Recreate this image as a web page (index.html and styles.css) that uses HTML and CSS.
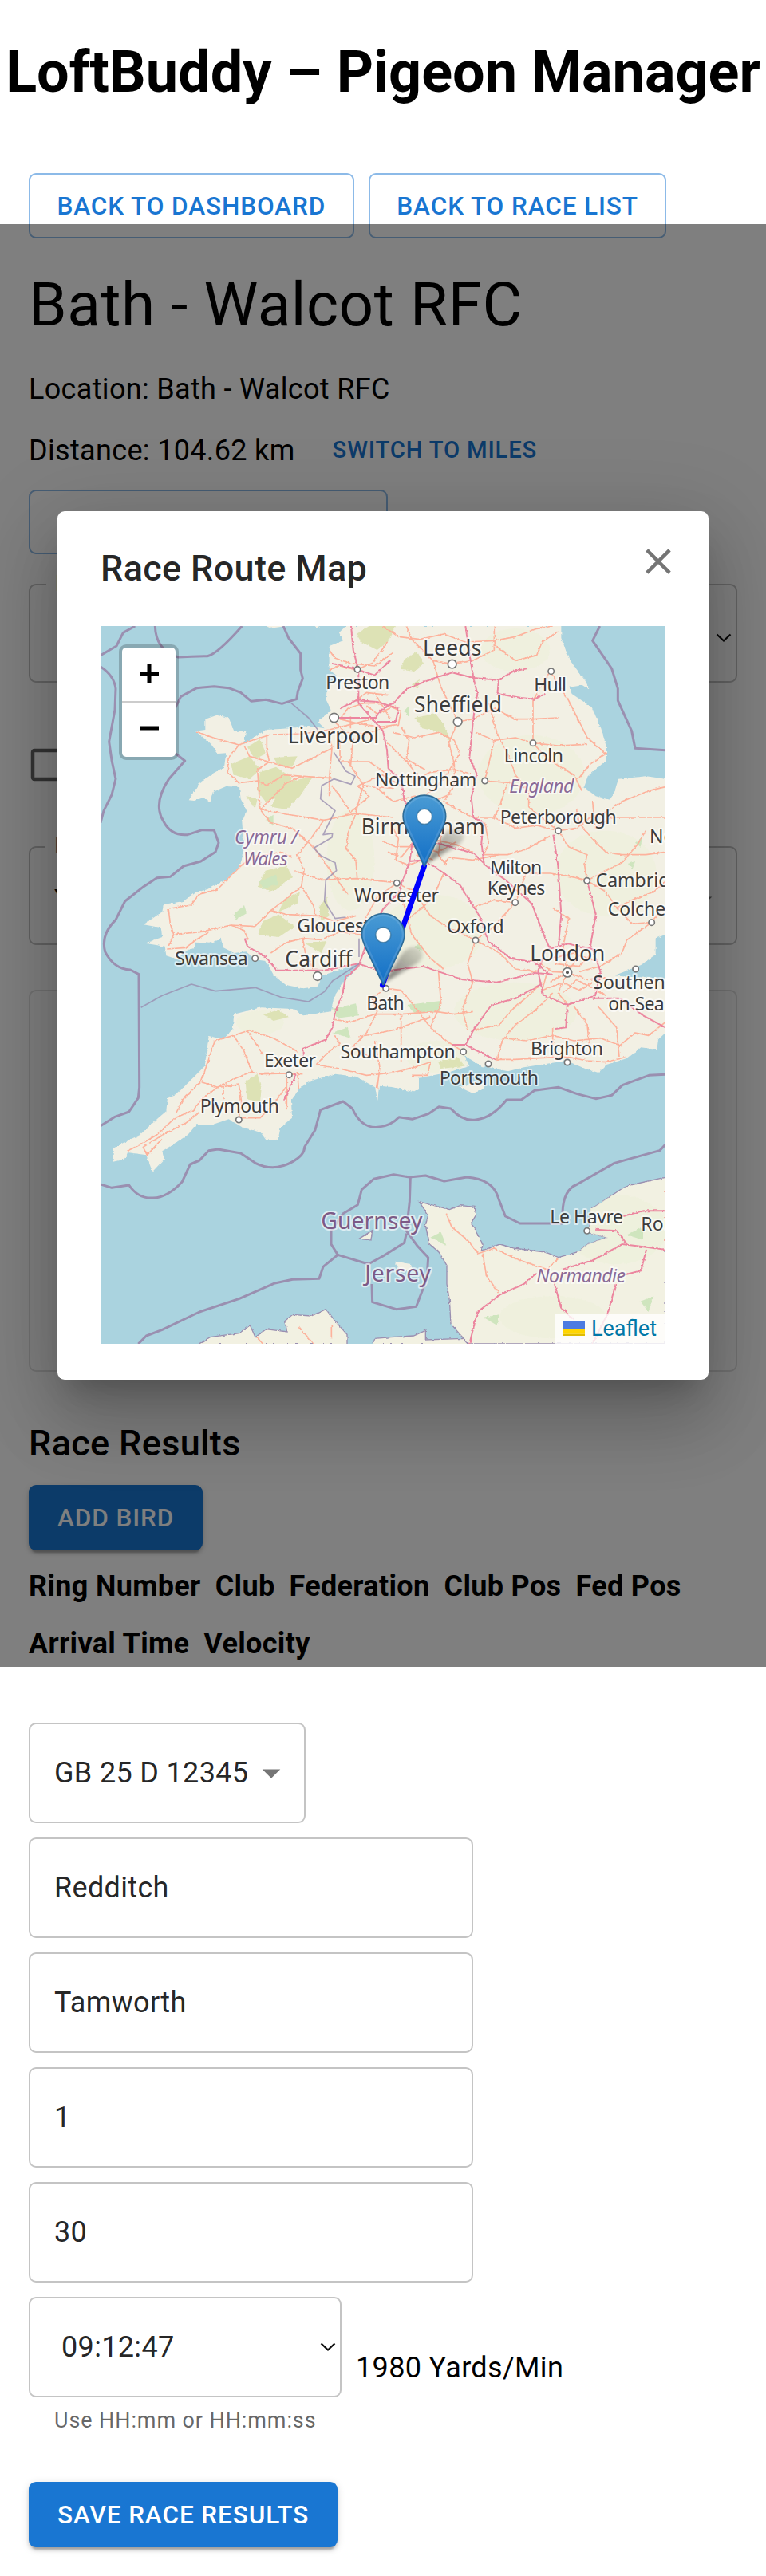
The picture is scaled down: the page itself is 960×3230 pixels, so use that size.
FILE: index.html
```html
<!DOCTYPE html>
<html lang="en">
<head>
  <meta charset="UTF-8">
  <title>LoftBuddy – Pigeon Manager</title>
  <link rel="stylesheet" href="styles.css">
</head>
<body>
  <h1 class="app-title">LoftBuddy – Pigeon Manager</h1>

  <main class="page">
    <div class="nav-buttons">
      <button class="btn btn-outlined">Back to Dashboard</button>
      <button class="btn btn-outlined">Back to Race List</button>
    </div>

    <h2 class="race-name">Bath - Walcot RFC</h2>
    <p class="info">Location: Bath - Walcot RFC</p>
    <div class="distance">
      <p class="info">Distance: 104.62 km</p>
      <button class="btn btn-text">Switch to Miles</button>
    </div>

    <div class="btn btn-outlined map-button"></div>

    <fieldset class="field field-time">
      <legend>L</legend>
      <svg class="chevron" viewBox="0 0 20 12"><path d="M1.5 1.5L10 9.5l8.5-8"/></svg>
    </fieldset>
    <svg class="checkbox" viewBox="0 0 24 24"><path d="M19 5v14H5V5h14m0-2H5c-1.1 0-2 .9-2 2v14c0 1.1.9 2 2 2h14c1.1 0 2-.9 2-2V5c0-1.1-.9-2-2-2z"/></svg>
    <fieldset class="field field-select">
      <legend>L</legend>
      <span>Y</span>
      <svg class="arrow" viewBox="0 0 24 24"><path d="M7 10l5 5 5-5z"/></svg>
    </fieldset>
    <div class="card"></div>

    <h3 class="section-title">Race Results</h3>
    <button class="btn btn-contained">Add Bird</button>

    <div class="results-head">
      <b>Ring Number</b>
      <b>Club</b>
      <b>Federation</b>
      <b>Club Pos</b>
      <b>Fed Pos</b>
      <b>Arrival Time</b>
      <b>Velocity</b>
    </div>

    <div class="results-row">
      <div class="input input-ring">
        <span>GB 25 D 12345</span>
        <svg class="arrow" viewBox="0 0 24 24"><path d="M7 10l5 5 5-5z"/></svg>
      </div>
      <div class="input">Redditch</div>
      <div class="input">Tamworth</div>
      <div class="input">1</div>
      <div class="input">30</div>
      <div class="arrival">
        <div>
          <div class="input input-time">
            <span>09:12:47</span>
            <svg class="chevron" viewBox="0 0 20 12"><path d="M1.5 1.5L10 9.5l8.5-8"/></svg>
          </div>
          <p class="helper">Use HH:mm or HH:mm:ss</p>
        </div>
        <p class="velocity">1980 Yards/Min</p>
      </div>
    </div>

    <button class="btn btn-contained save">Save Race Results</button>
  </main>

  <div class="backdrop">
    <div class="dialog">
      <div class="dialog-head">
        <h2>Race Route Map</h2>
        <svg class="close" viewBox="0 0 24 24"><path d="M19 6.41L17.59 5 12 10.59 6.41 5 5 6.41 10.59 12 5 17.59 6.41 19 12 13.41 17.59 19 19 17.59 13.41 12z"/></svg>
      </div>

      <div class="map">
        <svg class="map-tiles" viewBox="0 0 2124 2700">
          <defs>
            <linearGradient id="pin" x1="0" y1="0" x2="0" y2="1">
              <stop offset="0" stop-color="#4a9bd4"/>
              <stop offset="1" stop-color="#126fc6"/>
            </linearGradient>
            <linearGradient id="shade" x1="0" y1="1" x2="1" y2="0">
              <stop offset="0" stop-color="#000" stop-opacity=".7"/>
              <stop offset="1" stop-color="#000" stop-opacity=".12"/>
            </linearGradient>
            <filter id="rough" x="0" y="0" width="1" height="1">
              <feTurbulence type="fractalNoise" baseFrequency=".07" numOctaves="3" seed="4"/>
              <feDisplacementMap in="SourceGraphic" scale="9" xChannelSelector="R" yChannelSelector="G"/>
            </filter>
            <filter id="soft" x="-.5" y="-.5" width="2" height="2"><feGaussianBlur stdDeviation="7"/></filter>
            <clipPath id="coast">
              <path id="gb" d="M922 0L897 25 912 55 860 75V165L887 185 852 235 847 275 867 315 817 360 842 385 782 375 712 385 622 390 582 415 537 445 547 395 502 395 482 345 437 335 394 350V390L357 395 412 440 442 480 472 478 465 530 422 555 372 590 332 655 352 657 387 645 412 665 422 625 472 603 522 605 527 650 550 695 532 735 537 805 532 875 522 905 472 955 402 990 352 1005 312 1035 237 1047 232 1075 162 1123 227 1135 232 1170 167 1193 242 1205 247 1240 292 1255 312 1225 357 1210V1190L412 1193 452 1175 462 1210 502 1230 547 1225 582 1255 622 1260 652 1315 697 1350 762 1363 817 1355 832 1315 892 1295 972 1270 967 1285 917 1335 877 1395 867 1450 762 1465 722 1440 602 1435 502 1460 497 1515 462 1555 407 1542 392 1655 332 1715 282 1765 252 1775 247 1825 217 1850 147 1915 102 1935 47 1965V2015L92 2005 102 1980 172 1990 195 2053 240 2005 232 1975 257 1960 327 1915 362 1875 422 1875 482 1855 532 1885 602 1905 622 1933 667 1935 677 1885 720 1850 717 1785 747 1740 792 1710 882 1685 962 1695 1032 1735 1042 1785 1047 1730 1102 1735 1177 1753 1197 1740V1700L1302 1680 1387 1655 1367 1615 1432 1655 1532 1675 1592 1660 1752 1635 1822 1665 1872 1680 1902 1650 1982 1625 2032 1585 2092 1593 2097 1555 2124 1530V1325L1992 1320 1932 1315 2032 1275 2087 1235V1175L2124 1160V575L2052 565 1947 575 1932 625 1912 653 1862 640 1817 605 1832 565 1902 505V455L1882 385 1847 305 1772 255 1762 230 1812 223 1840 240 1822 205 1762 125 1732 45V0z"/>
              <path id="fr" d="M1197 2165L1312 2195 1352 2180 1407 2185 1412 2215 1394 2245 1437 2325 1432 2350 1502 2325 1552 2340 1672 2355 1722 2375 1792 2355 1832 2325 1902 2300 1832 2280 1842 2195 1962 2115 1992 2103 2124 2073V2700H1382L1352 2665 1317 2625 1312 2535 1302 2475V2405L1272 2355 1237 2325 1222 2255 1232 2215z"/>
            </clipPath>
          </defs>

          <rect width="2124" height="2700" fill="#aad3df"/>

          <g filter="url(#rough)">
            <!-- land -->
            <g fill="#f2f0e4">
              <use href="#gb"/>
              <path d="M1350 1735L1400 1758 1432 1745 1452 1722 1400 1718z"/>
              <path d="M610 -5L640 8 700 0zM802 0L812 8 822 0z"/>
            </g>
            <g fill="#f2f1e2" stroke="#9a8fb0" stroke-width="4">
              <use href="#fr"/>
              <path d="M367 2702L412 2675 522 2660 562 2630 582 2675 622 2645 702 2655 692 2615 722 2590 792 2595 847 2570 887 2620 927 2665V2702zM1022 2702L1032 2680 1092 2675 1177 2670 1222 2650V2685L1362 2680 1382 2702z"/>
              <path d="M972 2305L1022 2273 1017 2310z"/>
            </g>
            <path d="M1107 2390L1167 2400 1172 2425 1122 2430z" fill="#f2f0e4"/>

            <!-- farmland and hills -->
            <g clip-path="url(#coast)">
              <g fill="#eef1dc" opacity=".8">
                <ellipse cx="1620" cy="560" rx="200" ry="150"/>
                <ellipse cx="1900" cy="930" rx="190" ry="160"/>
                <ellipse cx="1250" cy="1150" rx="190" ry="140"/>
                <ellipse cx="1560" cy="1450" rx="230" ry="110"/>
                <ellipse cx="940" cy="880" rx="90" ry="190"/>
                <ellipse cx="1560" cy="90" rx="130" ry="80"/>
                <ellipse cx="1940" cy="2270" rx="190" ry="130"/>
                <ellipse cx="1700" cy="2600" rx="200" ry="80"/>
                <ellipse cx="1270" cy="1620" rx="120" ry="60"/>
                <ellipse cx="600" cy="1490" rx="90" ry="45"/>
              </g>
              <g fill="#dde2b5">
                <path d="M962 30L1010 0H1110L1080 60 1040 90 980 60z"/>
                <path d="M1140 130L1190 95 1215 140 1180 170 1130 165zM1180 345L1260 330 1290 370 1320 440 1280 400 1210 385zM1170 220L1200 200 1190 235z"/>
                <path d="M552 455L600 425 622 480 580 500zM490 520L560 490 600 540 560 575 500 560z"/>
                <path d="M600 550L660 530 720 570 690 640 620 660 590 620zM650 495L740 490 720 530 670 525zM690 590L800 565 750 640 700 690 640 680zM550 640L590 650 580 690z"/>
                <path d="M620 920L700 900 720 945 650 1000 590 980zM690 1030L750 1000 740 1045 670 1075zM610 1110L670 1085 730 1130 670 1170 590 1160z"/>
                <path d="M820 1060L850 1020 860 1090 830 1110zM770 1195L850 1185 830 1230z"/>
                <path d="M545 1710L590 1685 605 1740 600 1790 550 1780zM610 1460L670 1445 710 1470 650 1485z"/>
                <path d="M1270 1640L1340 1620 1370 1655 1280 1665z"/>
              </g>
              <g fill="#cfe5be">
                <path d="M500 1085L540 1050 550 1080 510 1105zM600 960L660 935 670 970 610 990zM620 730L650 710 650 750z"/>
                <path d="M870 1440L960 1420 970 1465 890 1475zM1150 1425L1280 1410 1280 1450 1180 1455zM870 1530L930 1510 940 1550z"/>
                <path d="M1980 2290L2040 2260 2040 2310zM1440 2600L1500 2590 1490 2630zM2030 2540L2080 2520 2060 2580zM1980 895L2010 885 2000 915z"/>
                <path d="M1140 320L1160 300 1160 340zM2010 815L2040 790 2030 830zM1180 1210L1200 1190 1210 1220zM1240 2300L1280 2280 1300 2330z"/>
              </g>
            </g>

            <!-- trunk roads -->
            <g class="road trunk">
              <path d="M360 397L430 422 520 447 570 430 640 408 760 405 860 390 940 370 1040 345"/>
              <path d="M520 447L480 500 478 550 520 590 590 582 625 600 690 560 760 565 870 572"/>
              <path d="M625 410V470L635 510 590 540 600 690 640 740 720 760 800 830 930 1010"/>
              <path d="M540 450L560 490 635 512 720 535 780 505 870 460"/>
              <path d="M600 690L650 640 700 590 760 565M605 690L700 708 840 730 960 705 1100 720M840 730L790 800 740 860 765 920 755 980 680 1040 640 1070 580 1130"/>
              <path d="M255 1060L262 1120 275 1160 380 1150 490 1125 540 1145 555 1180M262 1062L340 1050 370 1010 440 990 480 950 530 900 570 870 680 850 720 870"/>
              <path d="M275 1160L255 1205M250 1215L320 1210 360 1180 410 1150M580 1130L490 1125M640 1070L700 1085 820 1090 880 1110 960 1090"/>
              <path d="M640 1230L700 1190 760 1175 830 1180 900 1150 980 1160M760 1175L770 1230 800 1290M755 980L800 1050 810 1090M730 920L830 955 960 950 1110 965"/>
              <path d="M870 600L900 640 940 700 1010 640 970 600 1060 560 1130 600M960 705L930 780 925 840 960 880 965 950M990 590L960 700"/>
              <path d="M860 90L880 120 940 140 1030 150 1100 100M860 165L900 150 960 165 1020 140 1080 60"/>
              <path d="M860 400L870 460 860 570 860 640M900 430V510L1010 510 1080 560M950 420L940 530M930 510L990 600 1100 610"/>
              <path d="M900 350L930 310 990 290 1060 290 1130 320 1120 370 1050 380 960 365 900 350M880 360L920 400 1000 405 1080 380M940 340V385M1000 300L1040 330 1110 300M1030 250L1060 300 1090 350M960 280L1000 250 1080 260"/>
              <path d="M1062 0L1120 40 1200 50 1290 30 1372 60 1480 55 1560 40 1640 10 1700 0"/>
              <path d="M1150 0L1170 50 1250 130 1322 143 1400 130 1480 90 1480 0M1480 70L1560 130 1640 110 1660 60 1720 20"/>
              <path d="M1250 130L1280 230 1310 290 1343 360 1400 350 1480 310 1560 350 1626 350 1720 345M1626 440V280L1690 170M1626 440L1560 420 1480 430 1410 400"/>
              <path d="M1690 170L1760 280 1800 360 1830 420 1900 480 1840 520 1800 570M1626 440L1720 450 1830 445M1626 440L1680 500 1780 560 1810 620"/>
              <path d="M1460 290L1490 400 1530 480 1560 560 1610 620 1610 680 1680 740 1721 770M1445 582L1540 590 1600 610M1480 430L1445 582"/>
              <path d="M1100 400L1180 420 1270 400 1330 430 1350 480 1300 560 1260 610 1200 650M1080 440L1150 510 1200 570 1240 550 1330 540 1390 555M1130 380L1160 430 1150 500 1220 540"/>
              <path d="M1343 360L1310 440 1330 520 1330 600 1290 660 1340 690 1400 720M1040 610L1100 660 1180 640 1250 660 1320 630"/>
              <path d="M1400 720L1480 720 1500 680 1530 590M1445 740L1460 820 1440 860 1530 860 1600 840 1690 790M1480 720L1560 760 1640 750 1721 770"/>
              <path d="M1721 770L1790 760 1840 720 1900 700 1960 660 2060 620 2124 605M1790 690L1800 740 1840 790 1900 850 1960 860 2050 860 2124 850M1850 660L1860 760 1920 720 2124 720"/>
              <path d="M1721 770L1760 830 1830 860 1820 900 1829 958 1900 920 1960 890 2020 820 2050 770M1829 958L1760 940 1690 930 1600 930 1560 1040 1480 1030 1400 1060"/>
              <path d="M1829 958L1900 1000 1940 1060 2000 1030 2080 1000 2124 960M1940 1060L2000 1120 2072 1115 2110 1060M2072 1115L1980 1180 1960 1230 1880 1280 1800 1300"/>
              <path d="M1114 967L1180 1000 1240 1090 1300 1130 1410 1182 1480 1130 1559 1040M1114 967L1040 1020 980 1130 950 1160M1130 1010L1170 1160 1240 1250 1290 1290"/>
              <path d="M1410 1182L1380 1270 1400 1340 1360 1440 1380 1520M1410 1182L1500 1230 1560 1290 1640 1300M1290 900L1310 870 1400 880 1500 860M1290 930L1260 1000 1220 1050 1160 1100"/>
              <path d="M1080 850L1130 870 1170 820 1240 800 1330 820 1400 850M1150 740L1200 780 1190 860 1250 880M1060 810L1110 830 1190 830 1270 850 1340 810M1230 740L1280 790 1270 860 1300 900M1090 740L1120 800 1110 880 1160 900 1230 870"/>
              <path d="M1073 1363L1130 1370 1180 1430 1240 1510 1300 1560 1364 1601M1073 1363L1020 1400 1040 1450 1000 1530 950 1580 1010 1620"/>
              <path d="M880 1480L940 1490 1030 1460 1130 1460 1260 1450 1330 1460 1400 1450M970 1545L1100 1520 1240 1470M1240 1510L1280 1420 1270 1290M1130 1460V1640M1030 1560L1050 1660 1040 1740"/>
              <path d="M810 1650L860 1600 900 1570 880 1540M810 1650L900 1665 1000 1690 1100 1680 1180 1660 1240 1640 1230 1690 1170 1690"/>
              <path d="M760 1685L700 1683 600 1685 570 1675 500 1705 440 1735 380 1780 350 1820 280 1850 210 1915 150 1950 100 1975M570 1680L540 1600 500 1540 430 1560 400 1650 380 1710 310 1780 285 1830"/>
              <path d="M500 1540L560 1520 650 1550 740 1600M550 1520L610 1610M380 1715L440 1735 520 1725 530 1790 520 1850 600 1850 650 1800 700 1730M370 1830L320 1870 240 1910 160 1960 175 1990 230 1930M462 1735V1780M700 1700V1820M740 1680L745 1740"/>
              <path d="M1402 1520L1500 1500 1540 1450 1620 1380 1660 1340M1490 1635L1510 1560 1560 1500 1640 1440 1700 1380M1480 1630H1560L1650 1625 1752 1620 1830 1635 1900 1640 1980 1620"/>
              <path d="M1520 1550L1600 1560 1700 1540 1780 1560 1880 1550 1960 1580M1700 1510V1620M1780 1430L1830 1500 1840 1600M1870 1430L1940 1510 1950 1620M1950 1580L2010 1530 2060 1540 2124 1490"/>
              <path d="M1640 1260L1700 1300 1755 1303 1830 1330 1900 1320M1755 1303L1740 1200 1760 1100 1700 1060M1755 1303L1720 1380 1760 1430M1680 1300L1660 1370 1740 1340 1800 1370 1850 1340M1700 1250L1780 1230 1860 1260M1710 1270L1800 1280 1840 1240M1690 1340L1755 1303 1800 1240M1740 1380L1790 1330 1900 1390"/>
              <path d="M1300 2210L1320 2260 1380 2310 1420 2360 1480 2340 1560 2380 1680 2420 1707 2475M1437 2360L1450 2440 1500 2515M1680 2420L1720 2380M2124 2110V2345"/>
              <path d="M745 2635L800 2700M587 2675L610 2700M868 2630V2680"/>
            </g>

            <!-- motorways -->
            <g class="road motorway">
              <path d="M942 0L950 90 970 165V290L1062 395 1077 465 1082 535 1132 585 1142 655 1192 745 1262 815 1402 855 1440 890"/>
              <path d="M1372 0L1392 135 1402 195 1417 255 1402 345 1387 495 1414 555 1394 645 1402 720 1440 740 1432 815 1442 895 1522 955 1622 1045 1672 1175 1690 1215"/>
              <path d="M878 345L1032 345 1062 310 1100 290 1152 235 1257 195 1322 175 1402 195 1497 203 1552 170 1602 160M1497 203L1492 255 1582 270 1632 275 1672 255"/>
              <path d="M870 140L966 163 1030 185 1090 130M900 310L960 280 1040 285 1120 310 1110 360 1040 360"/>
              <path d="M1172 815L1162 885 1122 1000 1062 1065 1010 1165 970 1280 922 1320 907 1395 882 1450 872 1510 847 1555 760 1590 762 1620M730 1680V1700L690 1780"/>
              <path d="M1160 885L1217 880 1292 930 1352 975 1427 1095 1457 1185 1542 1250 1632 1265 1690 1310"/>
              <path d="M542 1175L552 1205 622 1245 662 1295H842L970 1270 1060 1300 1092 1295 1212 1280 1362 1330 1492 1340 1632 1305 1700 1310"/>
              <path d="M1660 1345L1560 1400 1470 1425 1402 1520 1372 1575H1322M1372 1575L1440 1610 1490 1635"/>
              <path d="M1645 1300L1672 1220 1755 1195 1850 1215 1880 1300 1860 1390 1755 1425 1665 1390z"/>
              <path d="M1755 1420L1750 1510 1710 1515M1850 1400L1950 1400 2040 1465 2124 1510M1830 960L1862 1085 1842 1205M1702 785L1720 900 1732 1085 1722 1200"/>
              <path d="M1387 2700L1417 2580 1502 2515 1592 2475 1637 2435M1737 2420L1852 2385 1962 2325 2124 2345M1707 2475L1732 2565 1780 2610M1937 2475L1907 2585 1850 2700M1972 2440L2032 2425 2052 2345M1962 2220L2042 2200H2124M1862 2270L1940 2275 1980 2325"/>
            </g>
          </g>

          <!-- borders -->
          <g class="border">
            <path d="M0 110L60 75 85 25 130 0M0 153Q50 185 57 235L54 315 32 435 42 505 57 575 42 635 12 695 0 740"/>
            <path d="M205 0Q207 90 292 117L342 115 402 113Q440 105 532 0"/>
            <path d="M687 0L707 45 752 103V165L760 197 742 245 737 275 682 292 622 277 567 283 527 250 482 233 427 227 362 233 302 265 277 315 270 470 317 507 257 575Q195 670 237 735 265 790 327 785L382 767 427 768 444 815 432 850 377 885 312 903 262 943 212 947 162 980 92 1035 57 1105Q0 1160 17 1225 50 1290 112 1293L144 1310 146 1735 142 1775 107 1827 52 1847 0 1880"/>
            <path d="M0 2100L42 2113 107 2103Q142 2155 197 2151 252 2150 307 2090L337 2025 372 2010 407 1973 442 1968 527 1983 582 2020Q652 2055 722 2015 767 1990 767 1960L807 1895 827 1820 912 1788 947 1815Q980 1890 1042 1885 1092 1880 1122 1847L1172 1855 1232 1835 1272 1808 1317 1815Q1362 1865 1412 1857 1472 1850 1527 1782L1582 1782 1632 1747 1722 1735 1792 1760 1862 1778 1922 1765 1962 1727 2062 1690 2124 1687"/>
            <path d="M142 2700L172 2670 232 2647 372 2580 522 2530 652 2473 722 2458 822 2455 837 2410 892 2365 867 2325V2275L912 2210 967 2177 982 2120 1027 2080 1102 2063 1162 2073 1222 2067 1292 2088 1377 2073Q1475 2080 1495 2150L1522 2220 1577 2247H1737"/>
            <path d="M1737 2205Q1740 2120 1792 2100L1932 2020 2102 1973 2124 1950"/>
            <path d="M1165 2073L1162 2165 1150 2275 1190 2330 1232 2375 1227 2455 1187 2560 1112 2570 1022 2543 1020 2475M892 2365L1007 2400 1062 2370 1142 2320 1150 2285"/>
            <path d="M1877 0L1850 55 1922 160 1945 235V280L1997 395 2010 460 2124 467"/>
            <path class="thin" d="M717 290L782 345 817 390M152 1435L232 1390 342 1347 432 1373 582 1360 682 1397 782 1413 842 1375 872 1335 972 1270"/>
            <path class="thin" d="M877 475L922 545 957 565 942 595 877 575 832 600 827 650 882 695 867 725 837 785 872 780 870 795 802 835 830 865 882 890 887 920 847 955 842 1035 882 1100 922 1095M972 1175V1245"/>
          </g>

          <g class="town">
            <circle cx="1322" cy="143" r="16"/><circle cx="1343" cy="360" r="16"/>
            <circle cx="878" cy="345" r="17"/><circle cx="816" cy="1317" r="16"/>
            <circle cx="966" cy="163" r="11"/><circle cx="1626" cy="440" r="11"/>
            <circle cx="1694" cy="170" r="11"/><circle cx="1445" cy="582" r="11"/>
            <circle cx="1721" cy="770" r="11"/><circle cx="1114" cy="967" r="11"/>
            <circle cx="1559" cy="1040" r="11"/><circle cx="1829" cy="958" r="11"/>
            <circle cx="2072" cy="1115" r="11"/><circle cx="1410" cy="1182" r="11"/>
            <circle cx="2012" cy="1290" r="11"/><circle cx="581" cy="1250" r="11"/>
            <circle cx="1073" cy="1363" r="11"/><circle cx="709" cy="1688" r="11"/>
            <circle cx="520" cy="1857" r="11"/><circle cx="1364" cy="1601" r="11"/>
            <circle cx="1458" cy="1647" r="11"/><circle cx="1755" cy="1641" r="11"/>
            <circle cx="1829" cy="2275" r="11"/><circle cx="1755" cy="1303" r="17"/>
            <circle class="capital" cx="1755" cy="1303" r="6"/>
          </g>

          <g class="label">
            <text x="847" y="237" textLength="240">Preston</text>
            <text x="1630" y="247" textLength="122">Hull</text>
            <text x="1517" y="513" textLength="223">Lincoln</text>
            <text x="1032" y="603" textLength="382">Nottingham</text>
            <text x="1502" y="745" textLength="438">Peterborough</text>
            <text x="2064" y="815">Norwich</text>
            <text x="1464" y="932" textLength="196">Milton</text>
            <text x="1454" y="1012" textLength="218">Keynes</text>
            <text x="1862" y="982">Cambridge</text>
            <text x="1907" y="1088">Colchester</text>
            <text x="954" y="1037" textLength="318">Worcester</text>
            <text x="739" y="1152" textLength="340">Gloucester</text>
            <text x="1302" y="1155" textLength="215">Oxford</text>
            <text x="280" y="1275" textLength="274">Swansea</text>
            <text x="1852" y="1365">Southend-</text>
            <text x="1909" y="1447" textLength="211">on-Sea</text>
            <text x="1000" y="1442" textLength="142">Bath</text>
            <text x="615" y="1660" textLength="195">Exeter</text>
            <text x="374" y="1830" textLength="298">Plymouth</text>
            <text x="902" y="1625" textLength="432">Southampton</text>
            <text x="1274" y="1725" textLength="373">Portsmouth</text>
            <text x="1617" y="1613" textLength="273">Brighton</text>
            <text x="1690" y="2247" textLength="275">Le Havre</text>
            <text x="2032" y="2273">Rouen</text>
          </g>
          <g class="label city">
            <text x="1212" y="110" textLength="220">Leeds</text>
            <text x="1179" y="325" textLength="330">Sheffield</text>
            <text x="704" y="442" textLength="343">Liverpool</text>
            <text x="980" y="782" textLength="465">Birmingham</text>
            <text x="694" y="1282" textLength="253">Cardiff</text>
            <text x="1615" y="1261" textLength="282">London</text>
          </g>
          <g class="label region">
            <text x="504" y="820" textLength="238">Cymru /</text>
            <text x="537" y="900" textLength="167">Wales</text>
            <text x="1537" y="627" textLength="243">England</text>
            <text x="1639" y="2468" textLength="335">Normandie</text>
          </g>
          <g class="label island">
            <text x="829" y="2267" textLength="381">Guernsey</text>
            <text x="994" y="2465" textLength="248">Jersey</text>
          </g>

          <!-- route and markers -->
          <g fill="url(#shade)">
            <path id="shadow" d="M0 0L62 -100Q95 -150 135 -130 165 -100 120 -70z" filter="url(#soft)" transform="translate(1219 897)" opacity=".75"/>
            <use href="#shadow" x="0" y="0" transform="translate(-155 446)"/>
          </g>
          <path class="route" d="M1217 903L1060 1350"/>
          <g id="marker" transform="translate(1134 633) scale(6.7)">
            <path d="M12.5.5C5.9.5.5 5.8.5 12.4c0 2.5.9 4.6 2 7L12.4 40.4h.2L22.5 19.4c1.1-2.4 2-4.5 2-7C24.5 5.8 19.1.5 12.5.5z" fill="url(#pin)" stroke="#2e6c97" stroke-width=".7"/>
            <path d="M12.5 1.5C6.5 1.5 1.5 6.3 1.5 12.4c0 2.2.8 4.3 1.9 6.6l9.1 19 9.1-19c1.1-2.3 1.9-4.4 1.9-6.6C23.5 6.3 18.5 1.5 12.5 1.5z" fill="none" stroke="#fff" stroke-opacity=".12"/>
            <circle cx="12.5" cy="12.5" r="4.3" fill="#fff" stroke="#2e6c97" stroke-width=".7" stroke-opacity=".7"/>
          </g>
          <use href="#marker" x="0" y="0" transform="translate(-155 445)"/>
        </svg>

        <div class="zoom">
          <svg viewBox="0 0 67 67"><path d="M22 32.5h24M34 20.5v24"/></svg>
          <svg viewBox="0 0 67 67"><path d="M22 31.5h24"/></svg>
        </div>

        <div class="attribution">
          <svg viewBox="0 0 12 8"><path fill="#4C7BE1" d="M0 0h12v4H0z"/><path fill="#FFD500" d="M0 4h12v3H0z"/><path fill="#E0BC00" d="M0 7h12v1H0z"/></svg>
          <span>Leaflet</span>
        </div>
      </div>
    </div>
  </div>
</body>
</html>
```

FILE: styles.css
```css
* {
  box-sizing: border-box;
}

body {
  position: relative;
  height: 3230px;
  margin: 0;
  background: #fff;
  color: #000;
  font-family: Roboto, sans-serif;
  font-size: 36px;
  overflow: hidden;
}

h2, h3, p {
  margin: 0;
}

.app-title {
  margin: 49px 0 0;
  font-size: 72px;
  line-height: 84px;
  text-align: center;
  white-space: nowrap;
}

.page {
  padding: 84px 36px 0;
}

.nav-buttons {
  display: flex;
  gap: 18px;
}

.btn {
  height: 82px;
  padding: 11px 33.5px;
  border: 0;
  border-radius: 9px;
  background: none;
  font: 500 31.5px/55px Roboto, sans-serif;
  letter-spacing: 0.02857em;
  text-transform: uppercase;
  white-space: nowrap;
}

.btn-outlined {
  border: 2px solid rgba(25, 118, 210, 0.5);
  color: #1976d2;
}

.btn-text {
  height: 69px;
  padding: 9px 11px;
  color: #1976d2;
  font-size: 29.25px;
  line-height: 51px;
}

.btn-contained {
  display: block;
  padding: 13px 36px;
  background: #1976d2;
  color: #fff;
  box-shadow: 0 7px 2px -4px rgba(0, 0, 0, 0.2), 0 4px 4px rgba(0, 0, 0, 0.14), 0 2px 11px rgba(0, 0, 0, 0.12);
}

.race-name {
  margin-top: 36px;
  font-size: 76.5px;
  font-weight: 400;
  line-height: 94px;
  letter-spacing: 0.00735em;
}

.info {
  letter-spacing: 0.00938em;
  line-height: 54px;
}

.race-name + .info {
  margin-top: 32px;
}

.distance {
  display: flex;
  align-items: center;
  gap: 36px;
  margin-top: 15px;
}

.map-button {
  width: 450px;
  height: 81px;
  margin-top: 15px;
}

/* labelled fields sit mostly behind the dialog */
.field {
  position: relative;
  height: 137px;
  margin: 24px 0 0;
  padding: 0 31px;
  border: 2px solid rgba(0, 0, 0, 0.23);
  border-radius: 9px;
}

.field legend {
  height: 27px;
  margin-left: -11px;
  padding: 0 11px;
  color: rgba(0, 0, 0, 0.6);
  font-size: 27px;
  line-height: 27px;
}

.field-time {
  display: flex;
  justify-content: flex-end;
  align-items: center;
  padding-right: 5px;
}

.chevron {
  width: 20px;
  height: 12px;
  fill: none;
  stroke: #111;
  stroke-width: 2.3;
}

.arrow {
  width: 54px;
  height: 54px;
  fill: #757575;
}

.checkbox {
  display: block;
  width: 54px;
  height: 54px;
  margin: 76px 0 0 -4px;
  fill: #666;
}

.field-select {
  display: flex;
  justify-content: space-between;
  align-items: center;
  margin-top: 62px;
  padding: 0 14px 0 30px;
}

.card {
  height: 479px;
  margin-top: 56px;
  border: 2px solid rgba(0, 0, 0, 0.12);
  border-radius: 9px;
}

.section-title {
  margin: 54px 0 16px;
  font-size: 45px;
  font-weight: 500;
  line-height: 72px;
  letter-spacing: 0.0075em;
}

.results-head {
  display: flex;
  flex-wrap: wrap;
  gap: 18px;
  margin-top: 18px;
  line-height: 54px;
  letter-spacing: 0.00938em;
}

.results-row {
  display: flex;
  flex-direction: column;
  gap: 18px;
  margin-top: 72px;
}

.input {
  display: flex;
  align-items: center;
  width: 557px;
  height: 126px;
  padding: 0 30px;
  border: 2px solid rgba(0, 0, 0, 0.23);
  border-radius: 9px;
  color: rgba(0, 0, 0, 0.87);
  letter-spacing: 0.00938em;
  white-space: nowrap;
}

.input-ring {
  justify-content: space-between;
  width: 347px;
  padding-right: 14px;
}

.input-time {
  justify-content: space-between;
  width: 392px;
  padding: 0 5px 0 39px;
}

.arrival {
  display: flex;
  align-items: center;
  gap: 18px;
}

.helper {
  margin: 7px 31px 0 32px;
  color: rgba(0, 0, 0, 0.6);
  font-size: 27px;
  line-height: 45px;
  letter-spacing: 0.03333em;
  white-space: nowrap;
}

.velocity {
  letter-spacing: 0.00938em;
}

.save {
  margin-top: 54px;
}

.backdrop {
  position: absolute;
  top: 281px;
  left: 0;
  display: flex;
  align-items: center;
  justify-content: center;
  width: 960px;
  height: 1809px;
  background: rgba(0, 0, 0, 0.5);
  overflow: hidden;
}

.dialog {
  width: 816px;
  height: 1089px;
  padding: 36px 54px 45px;
  border-radius: 9px;
  background: #fff;
  box-shadow: 0 25px 34px -16px rgba(0, 0, 0, 0.2), 0 54px 86px 7px rgba(0, 0, 0, 0.14), 0 20px 104px 18px rgba(0, 0, 0, 0.12);
}

.dialog-head {
  display: flex;
  justify-content: space-between;
  height: 108px;
}

.dialog-head h2 {
  color: rgba(0, 0, 0, 0.87);
  font-size: 45px;
  font-weight: 500;
  line-height: 72px;
  letter-spacing: 0.0075em;
}

.close {
  width: 54px;
  height: 54px;
  margin-right: -18px;
  fill: #757575;
}

.map {
  position: relative;
  width: 708px;
  height: 900px;
  overflow: hidden;
}

.map-tiles {
  display: block;
  width: 708px;
  height: 900px;
}

.road {
  fill: none;
  stroke-linejoin: round;
}

.trunk {
  stroke: #fdb29c;
  stroke-width: 5;
}

.motorway {
  stroke: #ec869f;
  stroke-width: 6;
}

.border {
  fill: none;
  stroke: #9a8fb0;
  stroke-width: 9;
  stroke-linejoin: round;
}

.border .thin {
  stroke-width: 5;
  stroke-opacity: 0.8;
}

.town {
  fill: #fff;
  stroke: #777;
  stroke-width: 5;
}

.town .capital {
  fill: #555;
  stroke: none;
}

.label {
  fill: #3c3c3c;
  stroke: rgba(255, 255, 255, 0.6);
  stroke-width: 12;
  stroke-linejoin: round;
  paint-order: stroke;
  font-family: "Noto Sans", sans-serif;
  font-size: 69px;
}

.label.city {
  font-size: 79px;
}

.label.region {
  fill: #8a6a96;
  font-style: italic;
}

.label.island {
  fill: #7d5a86;
  font-size: 85px;
}

.route {
  fill: none;
  stroke: #00f;
  stroke-width: 20;
  stroke-linecap: round;
}

.zoom {
  position: absolute;
  top: 23px;
  left: 23px;
  width: 75px;
  border: 4px solid rgba(0, 0, 0, 0.2);
  border-radius: 9px;
  background: #fff;
  background-clip: padding-box;
}

.zoom svg {
  display: block;
  width: 67px;
  height: 68px;
  stroke: #000;
  stroke-width: 5;
}

.zoom svg:first-child {
  height: 69px;
  border-bottom: 2px solid #ccc;
}

.attribution {
  position: absolute;
  right: 0;
  bottom: 0;
  display: flex;
  align-items: center;
  gap: 8px;
  height: 38px;
  padding: 0 11px;
  background: rgba(255, 255, 255, 0.8);
  color: #0078a8;
  font-size: 27px;
}

.attribution svg {
  width: 27px;
  height: 18px;
}
```
